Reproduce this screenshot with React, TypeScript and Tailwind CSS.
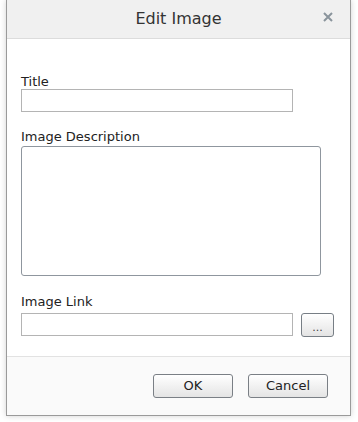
export default function App() {
  return (
    <div className="h-[422px] w-[358px] bg-white font-['DejaVu_Sans',sans-serif]">
      <div className="ml-[6px] flex h-[416px] w-[345px] flex-col border-x border-b border-[#9a9a9a] bg-white shadow-[0_0_6px_rgba(0,0,0,0.18)]">
        <div className="relative flex h-[39px] items-center justify-center border-b border-[#dcdcdc] bg-[#f0f0f0]">
          <span className="text-[16px] text-[#333]">Edit Image</span>
          <svg className="absolute right-[17px] top-[12px]" width="10" height="10" viewBox="0 0 10 10">
            <path d="M1 1L9 9M9 1L1 9" stroke="#8a949c" strokeWidth="2" />
          </svg>
        </div>
        <div className="flex flex-1 flex-col px-[14px] pt-[35px] text-[13px] text-[#222]">
          <label className="leading-[15px]">Title</label>
          <input className="h-[23px] w-[272px] border border-[#b4b4b4] bg-white outline-none" />
          <label className="mt-[17px] leading-[15px]">Image Description</label>
          <textarea className="mt-[2px] h-[130px] w-[300px] resize-none rounded-[3px] border border-[#8f969e] bg-white outline-none" />
          <label className="mt-[18px] leading-[15px]">Image Link</label>
          <div className="mt-[4px] flex items-start gap-[8px]">
            <input className="h-[23px] w-[272px] border border-[#b4b4b4] bg-white outline-none" />
            <button className="flex h-[24px] w-[33px] items-end justify-center rounded-[3px] border border-[#777e85] bg-gradient-to-b from-white to-[#e4e4e4] pb-[3px] text-[11px] leading-[11px] text-[#444]">
              ...
            </button>
          </div>
        </div>
        <div className="flex h-[59px] items-center justify-end gap-[15px] border-t border-[#e2e2e2] bg-[#fafafa] pr-[22px]">
          <button className="h-[24px] w-[80px] rounded-[3px] border border-[#7a7f85] bg-gradient-to-b from-white to-[#e4e4e4] text-[13px] text-[#222]">
            OK
          </button>
          <button className="h-[24px] w-[80px] rounded-[3px] border border-[#7a7f85] bg-gradient-to-b from-white to-[#e4e4e4] text-[13px] text-[#222]">
            Cancel
          </button>
        </div>
      </div>
    </div>
  );
}
